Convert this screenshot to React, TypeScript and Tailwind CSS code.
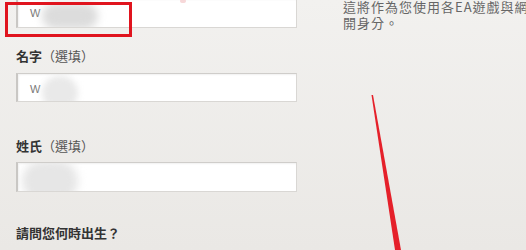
import React from "react";

const cjk = '"Noto Sans CJK TC", "Noto Sans", sans-serif';

function Field({ h, children }: { h: string; children?: React.ReactNode }) {
  return (
    <div
      className={`relative w-[281px] ${h} bg-white border border-[#d9d7d4] border-l-[2px] border-l-[#c9c7c4] border-t-[#cfcdca] shadow-[inset_1px_1px_2px_rgba(0,0,0,0.06)] overflow-hidden`}
    >
      {children}
    </div>
  );
}

export default function App() {
  return (
    <div
      className="relative w-[526px] h-[250px] overflow-hidden bg-gradient-to-b from-[#f2f1ef] to-[#eae8e5]"
      style={{ fontFamily: cjk }}
    >
      <div className="flex">
        <div className="pl-4 flex flex-col">
          <div className="-mt-[2px]">
            <Field h="h-[30px]">
              <span className="absolute left-[12px] top-[9px] text-[11px] leading-none text-[#777]" style={{ fontFamily: '"Liberation Sans", sans-serif' }}>
                W
              </span>
              <div className="absolute left-[24px] top-[4px] w-[56px] h-[26px] rounded-full bg-[#dcdcdc] blur-[4px]" />
            </Field>
          </div>
          <div className="mt-[19px] h-[17px] leading-[17px] text-[13px] text-[#333]">
            <span className="font-bold">名字</span>
            <span className="text-[#555] font-normal">（選填）</span>
          </div>
          <div className="mt-[9px]">
            <Field h="h-[29px]">
              <span className="absolute left-[12px] top-[10px] text-[11px] leading-none text-[#777]" style={{ fontFamily: '"Liberation Sans", sans-serif' }}>
                W
              </span>
              <div className="absolute left-[24px] top-[2px] w-[36px] h-[34px] rounded-full bg-[#e9e9e9] blur-[3px]" />
            </Field>
          </div>
          <div className="mt-[35px] h-[17px] leading-[17px] text-[13px] text-[#333]">
            <span className="font-bold">姓氏</span>
            <span className="text-[#555] font-normal">（選填）</span>
          </div>
          <div className="mt-[8px]">
            <Field h="h-[30px]">
              <div className="absolute left-[4px] top-[-2px] w-[56px] h-[40px] rounded-full bg-[#e6e6e6] blur-[4px]" />
            </Field>
          </div>
          <div className="mt-[32px] h-[17px] leading-[17px] text-[13px] font-bold text-[#333]">
            請問您何時出生？
          </div>
        </div>
        <div className="ml-[46px] -mt-[1px] w-[273px] shrink-0 text-[13px] leading-[16px] tracking-[1px] text-[#666]">
          這將作為您使用各EA遊戲與網路服務時的公開身分。
        </div>
      </div>

      <div className="absolute left-[5px] top-[2px] w-[127px] h-[35px] border-[3px] border-[#e0141e]" />

      <svg className="absolute left-0 top-0 pointer-events-none" width="526" height="250">
        <polygon points="371.5,95 373,95 401,250 395,250" fill="#e5202a" />
        <ellipse cx="183" cy="1" rx="3" ry="2" fill="#f4c7c9" opacity="0.7" />
      </svg>
    </div>
  );
}
